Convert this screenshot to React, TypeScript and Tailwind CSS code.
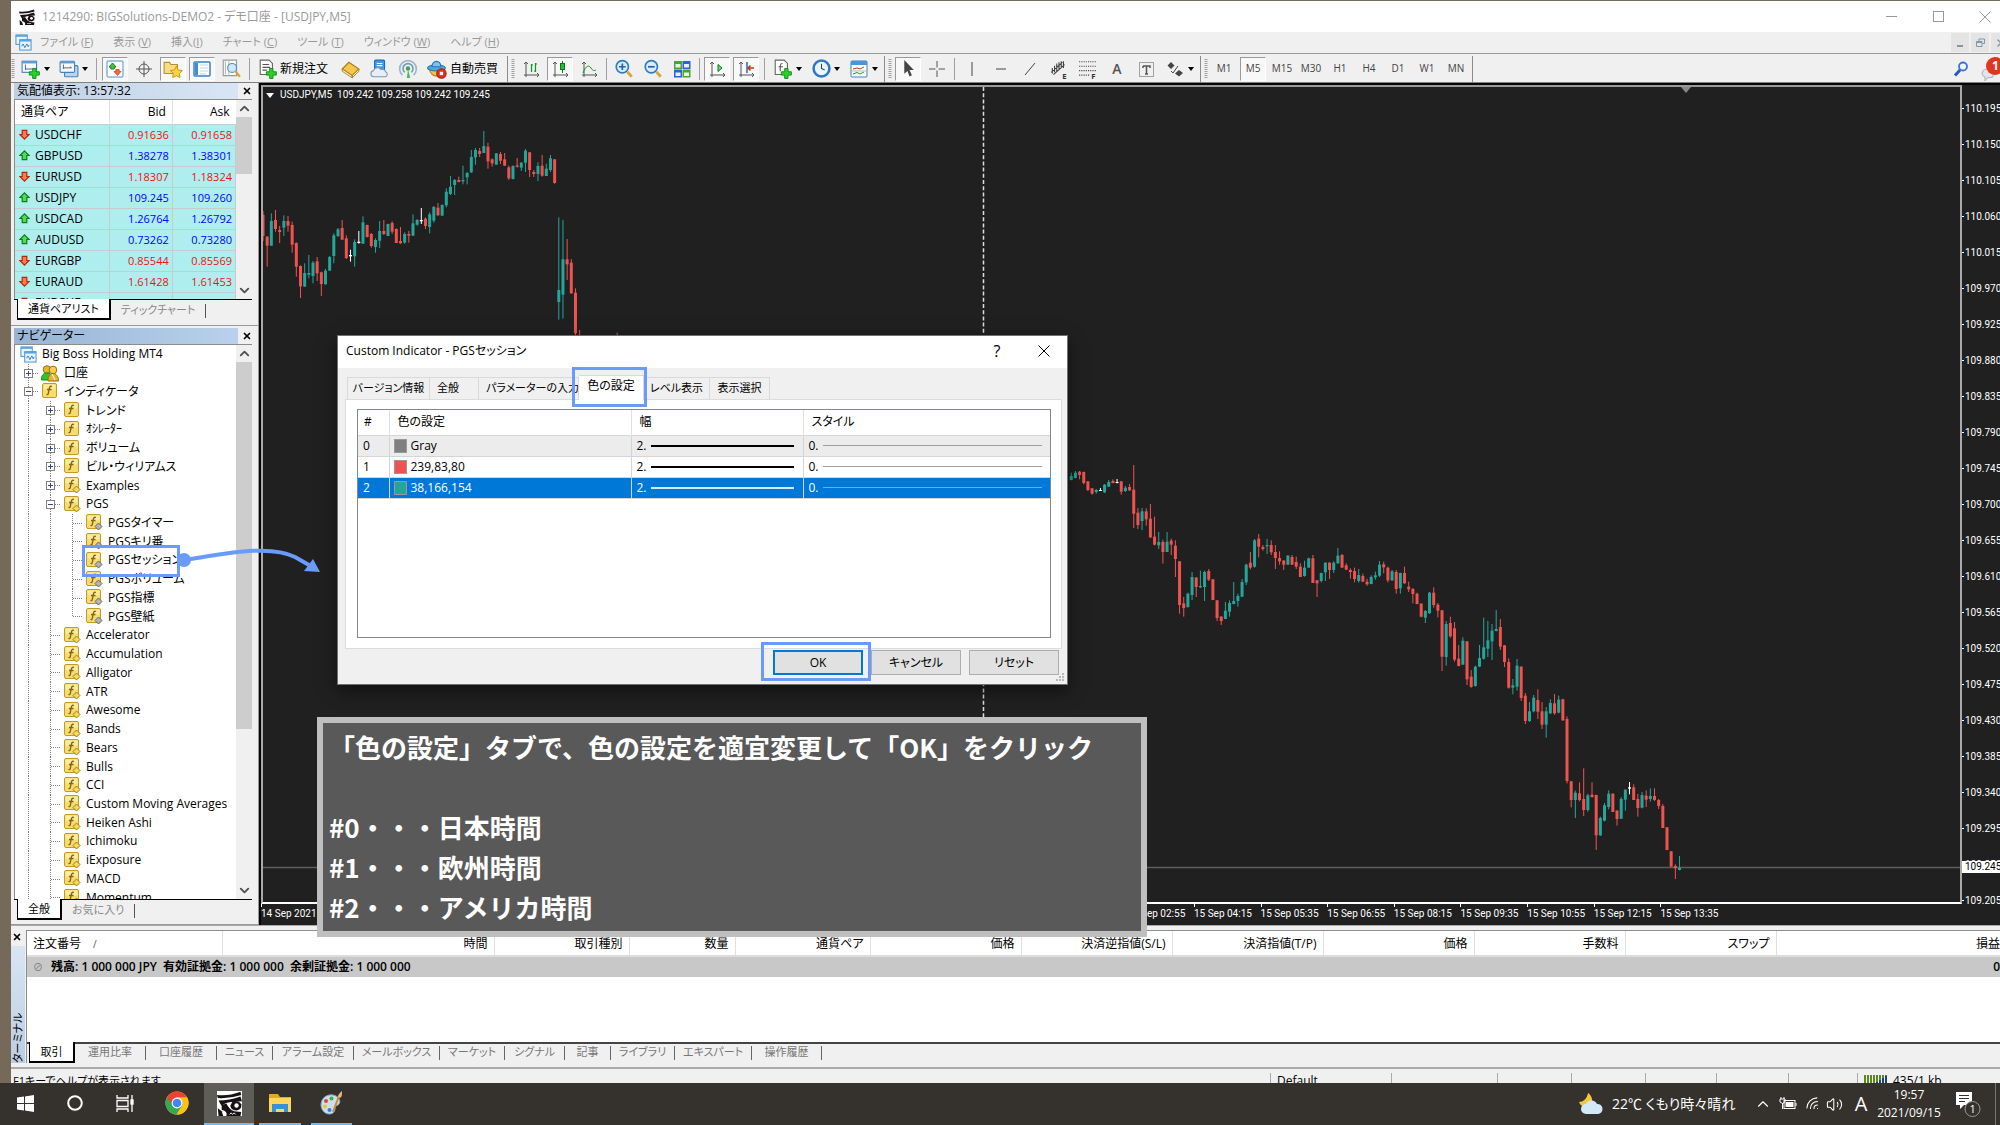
import { ReactNode } from 'react'
import clsx from 'clsx'
import { Wifi, Volume2, ChevronUp, ChevronDown, X } from 'lucide-react'

const UP = '#26a69a'
const DOWN = '#ef5350'

/* ---------- icons ---------- */

function Svg({ size = 18, children }: { size?: number; children: ReactNode }) {
  return (
    <svg width={size} height={size} viewBox="0 0 18 18" fill="none" className="shrink-0">
      {children}
    </svg>
  )
}

function LogoIcon({ size = 16, light = false }: { size?: number; light?: boolean }) {
  return (
    <svg width={size} height={size} viewBox="0 0 16 16" className="shrink-0">
      <rect width="16" height="16" fill={light ? '#fff' : 'none'} />
      <path d="M0 2.500Q7 3.500 15 0.500L15.500 2.500Q8 5 0.500 4.500Z" fill="#171114" />
      <path d="M1 6Q8 6 15 3.500L16 6.500L9 7Q5 7.500 3 9.500L2 8Z" fill="#171114" />
      <path d="M10 6.500Q14 6 15.500 8.500Q16 12 12.500 12.500Q9 12.500 8.500 9.500Z" fill="#171114" />
      <path d="M3 9L6 8Q8 12 11 13L15.500 13.500L15 16H6Q7 13 3 12Z" fill="#171114" />
      <circle cx="12.500" cy="9.300" r="1.400" fill="#fff" />
      <path d="M0.500 11L3 13L4 16H1Z" fill="#171114" />
      <path d="M8 15l1-1 1 1 1-1 1 1" stroke="#fff" strokeWidth="0.600" fill="none" />
    </svg>
  )
}

function WindowsIcon() {
  return (
    <Svg size={17}>
      <rect x="1" y="1" width="12" height="10" fill="#eaf4fd" stroke="#3f8fd2" />
      <rect x="1" y="1" width="12" height="2" fill="#5aa5e0" />
      <rect x="5" y="6" width="12" height="11" fill="#eaf4fd" stroke="#3f8fd2" />
      <rect x="5" y="6" width="12" height="2" fill="#5aa5e0" />
      <path d="M7 13l1.500-2.500 2 4 2-4 1.500 3 1-2" stroke="#2f7fc8" />
    </Svg>
  )
}

const plus = <path d="M10.500 8.500h3v3h3v3h-3v3h-3v-3h-3v-3h3z" fill="#2bd02b" stroke="#0c8a12" strokeWidth="0.8" />

const icons = {
  newChart: (
    <Svg size={20}>
      <rect x="1" y="2" width="13" height="10" fill="#f4fafe" stroke="#4482b5" />
      <path d="M1 3h13" stroke="#5d9bd0" strokeWidth="2" />
      <path d="M4 5v5M4 9h7" stroke="#557" strokeWidth="0.8" />
      {plus}
    </Svg>
  ),
  profiles: (
    <Svg size={20}>
      <rect x="5" y="6" width="12" height="10" rx="1" fill="#b9d6ee" stroke="#4482b5" />
      <rect x="1" y="2" width="13" height="10" rx="1" fill="#f4fafe" stroke="#4482b5" />
      <path d="M1 3h13" stroke="#5d9bd0" strokeWidth="2" />
      <path d="M4 5v4M4 8h7M10 7l1.500 1" stroke="#557" strokeWidth="0.8" />
    </Svg>
  ),
  marketWatch: (
    <Svg>
      <rect x="1" y="1" width="16" height="16" rx="1" fill="#fff" stroke="#4a90c8" />
      <path d="M6.500 3l3.500 4H8.200v2H4.800V7H3z" fill="#ff6a3a" stroke="#a82b0c" strokeWidth="0.6" />
      <path d="M11.500 15.500l3.500-4h-1.800v-2H9.800v2H8z" fill="#ff6a3a" stroke="#a82b0c" strokeWidth="0.6" />
      <path d="M6.500 3l3.500 4H8.200v2H4.800V7H3z" fill="#2fc93f" stroke="#0b7a15" strokeWidth="0.6" />
    </Svg>
  ),
  target: (
    <Svg>
      <circle cx="9" cy="9" r="5" stroke="#555" />
      <path d="M9 1v16M1 9h16" stroke="#555" />
    </Svg>
  ),
  navigator: (
    <Svg size={20}>
      <path d="M1 3h5l1 2h6v8H1z" fill="#f7dc84" stroke="#b9902a" />
      <path d="M12 6.500l1.700 3.400 3.700.5-2.700 2.600.6 3.700-3.300-1.700-3.300 1.700.6-3.700L6.600 10.400l3.700-.5z" fill="#ffd63a" stroke="#c48a0c" strokeWidth="0.8" />
    </Svg>
  ),
  terminal: (
    <Svg>
      <rect x="1" y="2" width="16" height="14" rx="1" fill="#fff" stroke="#3a7fc0" strokeWidth="1.500" />
      <rect x="2" y="3" width="3" height="12" fill="#3f8fd8" />
      <path d="M7 5h8M7 8h8M7 11h8M7 14h6" stroke="#9cc1e4" strokeWidth="0.7" />
    </Svg>
  ),
  tester: (
    <Svg size={20}>
      <path d="M2 1h12v14H2z" fill="#fbfbfb" stroke="#999" />
      <path d="M4 2v12M7 2v12" stroke="#bbb" />
      <circle cx="10" cy="8" r="4" fill="#cfe7f8" stroke="#4c90c6" />
      <path d="M13 11l4 5" stroke="#d9a433" strokeWidth="2" />
    </Svg>
  ),
  newOrder: (
    <Svg size={20}>
      <path d="M2 1h8l3 3v10H2z" fill="#fff" stroke="#666" />
      <path d="M4 5h6M4 7.500h7M4 10h4" stroke="#555" />
      {plus}
    </Svg>
  ),
  book: (
    <Svg size={20}>
      <path d="M2 9l6-6 9 6-6 6z" fill="#f4c64a" stroke="#a8791a" />
      <path d="M2 9v2l9 6v-2zM11 15v2l6-6V9z" fill="#fff3cf" stroke="#a8791a" strokeWidth="0.8" />
    </Svg>
  ),
  vps: (
    <Svg size={20}>
      <rect x="5" y="1" width="9" height="9" rx="1" fill="#3d9be8" stroke="#1b6cb8" />
      <path d="M7 4h5M7 6h5" stroke="#fff" />
      <path d="M4 16a2.800 2.800 0 0 1 0-5.500 4 4 0 0 1 7-1 3 3 0 0 1 4 2 2.500 2.500 0 0 1 0 4.500z" fill="#e8eef6" stroke="#8097b5" />
    </Svg>
  ),
  signal: (
    <Svg size={20}>
      <path d="M4 14.500a7.500 7.500 0 1 1 10 0" stroke="#9fb6cc" strokeWidth="1.500" />
      <path d="M6 12a4.500 4.500 0 1 1 6 0" stroke="#6f9fb0" strokeWidth="1.500" />
      <circle cx="9" cy="8.500" r="2" fill="#3aa655" />
      <path d="M9 9l2 8H8z" fill="#49b862" />
    </Svg>
  ),
  autoTrade: (
    <Svg size={20}>
      <path d="M2 9c2 8 12 9 14 0z" fill="#f5c542" stroke="#b98a1a" />
      <ellipse cx="8.500" cy="8" rx="8" ry="2.800" fill="#52a8e0" stroke="#2476b0" />
      <path d="M4.500 7c0-6.500 8-6.500 8 0z" fill="#7cc3ee" stroke="#2476b0" />
      <circle cx="13" cy="13" r="4.200" fill="#e03020" stroke="#a81a10" />
      <rect x="11.500" y="11.500" width="3" height="3" fill="#fff" />
    </Svg>
  ),
  bars: (
    <Svg>
      <path d="M4 2v15M2 15h15M2 4l2-2 2 2M15 13l2 2-2 2" stroke="#555" />
      <path d="M9.500 4v8M11 5H9.500M13.500 3v9M12 11h1.500M13.500 4H15" stroke="#0b9a1b" strokeWidth="1.200" />
    </Svg>
  ),
  candles: (
    <Svg>
      <path d="M4 2v15M2 15h15M2 4l2-2 2 2M15 13l2 2-2 2" stroke="#555" />
      <path d="M11.500 1v12" stroke="#0b7a15" />
      <rect x="9.500" y="3.500" width="4" height="6" fill="#22c03a" stroke="#0b7a15" />
    </Svg>
  ),
  line: (
    <Svg>
      <path d="M4 2v15M2 15h15M2 4l2-2 2 2M15 13l2 2-2 2" stroke="#555" />
      <path d="M3 13c3-8 6-8 8-5s3 3 5 2" stroke="#0b9a1b" />
    </Svg>
  ),
  zoomIn: (
    <Svg size={20}>
      <circle cx="7.500" cy="7" r="5.500" fill="#d8ecfb" stroke="#2b7cc4" strokeWidth="1.500" />
      <path d="M4.500 7h6M7.500 4v6" stroke="#1f64a8" strokeWidth="1.500" />
      <path d="M12 11.500l4 4.500" stroke="#dba63a" strokeWidth="2.500" />
    </Svg>
  ),
  zoomOut: (
    <Svg size={20}>
      <circle cx="7.500" cy="7" r="5.500" fill="#d8ecfb" stroke="#2b7cc4" strokeWidth="1.500" />
      <path d="M4.500 7h6" stroke="#1f64a8" strokeWidth="1.500" />
      <path d="M12 11.500l4 4.500" stroke="#dba63a" strokeWidth="2.500" />
    </Svg>
  ),
  tile: (
    <Svg>
      <rect x="1" y="1" width="8" height="8" fill="#4ca52a" />
      <rect x="9.500" y="1" width="8" height="8" fill="#2d63d6" />
      <rect x="1" y="9.500" width="8" height="8" fill="#2d63d6" />
      <rect x="9.500" y="9.500" width="8" height="8" fill="#4ca52a" />
      <path d="M2.500 4h5v3.500h-5zM11 4h5v3.500h-5zM2.500 12.500h5V16h-5zM11 12.500h5V16h-5z" fill="#e4f2ff" />
    </Svg>
  ),
  autoScroll: (
    <Svg>
      <path d="M4 2v15M2 15h15M2 4l2-2 2 2M15 13l2 2-2 2" stroke="#555" />
      <path d="M10 4.500l4 3.500-4 3.500z" fill="#5fe070" stroke="#0b7a15" />
    </Svg>
  ),
  chartShift: (
    <Svg>
      <path d="M4 2v15M2 15h15M2 4l2-2 2 2M15 13l2 2-2 2" stroke="#555" />
      <path d="M10 2v11" stroke="#2766b8" strokeWidth="1.500" />
      <path d="M11 8h6M13.500 5.500L11 8l2.500 2.500" stroke="#c43a12" strokeWidth="1.500" />
    </Svg>
  ),
  indicators: (
    <Svg size={20}>
      <path d="M2 1h8l3 3v10H2z" fill="#fff" stroke="#666" />
      <path d="M8.500 4c-2 0-2 1-2 3v4M5 7h4" stroke="#555" />
      {plus}
    </Svg>
  ),
  clock: (
    <Svg size={19}>
      <circle cx="9" cy="9" r="7.500" fill="#eaf5fd" stroke="#2c78c8" strokeWidth="2.400" />
      <path d="M9 4.500V9l3 1.500" stroke="#345" />
    </Svg>
  ),
  templates: (
    <Svg>
      <rect x="1" y="1" width="16" height="16" rx="1" fill="#fff" stroke="#3f82c0" />
      <rect x="1" y="1" width="16" height="4" fill="#4a94d8" />
      <path d="M3 9l4-1 3 1 4-2" stroke="#c0391b" />
      <path d="M3 14l4-1.500 3 1.500 4-2" stroke="#1d9a34" />
      <path d="M1 11h16" stroke="#9ab" strokeWidth="0.8" />
    </Svg>
  ),
  cursor: (
    <Svg size={19}>
      <path d="M5 1v13l3-2.700 2 5.200 2.200-1-2.200-5h4z" fill="#444" />
    </Svg>
  ),
  cross: (
    <Svg>
      <path d="M9 1v6.500M9 10.500V17M1 9h6.500M10.500 9H17" stroke="#555" />
    </Svg>
  ),
  vline: <Svg><path d="M9 2v14" stroke="#444" /></Svg>,
  hline: <Svg><path d="M4 9h10" stroke="#444" /></Svg>,
  tline: <Svg><path d="M4 15L14 3" stroke="#444" /></Svg>,
  channel: (
    <Svg size={20}>
      <path d="M2 12L12 3M4 14L14 5M3 8v5M5 6v6M7 4v7M9 3v6M11 2v6M13 2v6" stroke="#444" />
      <text x="12" y="18" fontSize="7" fontWeight="700" fill="#333">E</text>
    </Svg>
  ),
  fibo: (
    <Svg size={20}>
      <path d="M1 2.500h15M1 6.500h15M1 10.500h15M1 14.500h9" stroke="#444" strokeDasharray="1 1" />
      <text x="12" y="18" fontSize="7" fontWeight="700" fill="#333">F</text>
    </Svg>
  ),
  textA: <span className="text-sm font-semibold text-[#555]">A</span>,
  label: (
    <Svg>
      <rect x="2.500" y="2.500" width="14" height="14" stroke="#555" strokeDasharray="1 1" />
      <path d="M6 6h7v2M9.500 6v8M8 14h3M6 6v2" stroke="#555" strokeWidth="1.500" />
    </Svg>
  ),
  arrows: (
    <Svg>
      <path d="M5 2l3.500 3.500L5 9 1.500 5.500zM13 10l4 3-4 3.500-4-3z" fill="#444" />
      <path d="M5 11l2 2 5-7" stroke="#444" />
    </Svg>
  ),
}

function FolderGlyph({ mark }: { mark?: 'gold' | 'gray' }) {
  return (
    <svg width="17" height="17" viewBox="0 0 17 17" className="shrink-0">
      <rect x="0.500" y="0.500" width="14" height="14" rx="1.500" fill="#f6dc70" stroke="#c79a1d" />
      <rect x="1.500" y="1.500" width="12" height="5" fill="#fbeaa0" />
      <path d="M10 3.500c-2-.8-2.500.5-2.800 2.500L6.400 10c-.3 1.500-1 1.800-2 1.500M5 6.500h4.500" stroke="#86640e" strokeWidth="1.300" fill="none" />
      {mark && (
        <path
          d="M12.500 9l3.500 3.500-3.500 3.500L9 12.500z"
          fill={mark === 'gold' ? '#f7d95a' : '#b5b5b5'}
          stroke={mark === 'gold' ? '#a57b12' : '#666'}
        />
      )}
    </svg>
  )
}

function AccountsIcon() {
  return (
    <svg width="18" height="17" viewBox="0 0 18 17" className="shrink-0">
      <circle cx="6" cy="4.500" r="3.800" fill="#e8b62a" stroke="#97700f" />
      <path d="M0.500 15c0-5 2-7 5.500-7s5 2 5 7z" fill="#2fc234" stroke="#158a1c" />
      <circle cx="12" cy="5" r="3.800" fill="#f5cf52" stroke="#97700f" />
      <path d="M7 16c0-5 2-7.500 5-7.500s5.500 2.500 5.500 7.500z" fill="#e8b62a" stroke="#97700f" />
      <path d="M11 9l3 6" stroke="#fff" />
    </svg>
  )
}

function PriceArrow({ up }: { up: boolean }) {
  return (
    <svg width="11" height="11" viewBox="0 0 12 12" className="shrink-0">
      {up ? (
        <path d="M6 1l5 5H8.500v4.500h-5V6H1z" fill="#4fdc53" stroke="#0d7d1a" strokeWidth="1.300" />
      ) : (
        <path d="M6 11l5-5H8.500V1.500h-5V6H1z" fill="#ff7a45" stroke="#b0290e" strokeWidth="1.300" />
      )}
    </svg>
  )
}

/* ---------- title, menu, toolbar ---------- */

function TitleBar() {
  return (
    <header className="flex h-[31px] shrink-0 items-center bg-white pl-2 text-xs text-[#999]">
      <LogoIcon />
      <h1 className="ml-[7px] flex-1">1214290: BIGSolutions-DEMO2 - デモ口座 - [USDJPY,M5]</h1>
      <button aria-label="最小化" className="flex w-[47px] justify-center">
        <svg width="11" height="11"><path d="M0 5.500h11" stroke="#999" /></svg>
      </button>
      <button aria-label="最大化" className="flex w-[47px] justify-center">
        <svg width="11" height="11"><rect x="0.500" y="0.500" width="10" height="10" fill="none" stroke="#999" /></svg>
      </button>
      <button aria-label="閉じる" className="flex w-[38px] justify-center pl-2">
        <svg width="12" height="12"><path d="M0.500 0.500l11 11M11.500 0.500l-11 11" stroke="#999" /></svg>
      </button>
    </header>
  )
}

const menus = [
  ['ファイル (', 'F'],
  ['表示 (', 'V'],
  ['挿入(', 'I'],
  ['チャート (', 'C'],
  ['ツール (', 'T'],
  ['ウィンドウ (', 'W'],
  ['ヘルプ (', 'H'],
]

function MenuBar() {
  return (
    <nav className="flex h-[21px] shrink-0 items-center pl-1 text-[11px] text-[#999]">
      <WindowsIcon />
      <div className="ml-2 flex flex-1 gap-5">
        {menus.map(([label, key]) => (
          <button key={key}>
            {label}
            <u>{key}</u>)
          </button>
        ))}
      </div>
      <div className="flex h-[19px] gap-0.5 text-[#8296a8]">
        <button aria-label="最小化" className="flex w-[18px] items-end justify-center bg-[#e4e4e4] pb-[5px]">
          <svg width="6" height="2"><rect width="6" height="2" fill="#8296a8" /></svg>
        </button>
        <button aria-label="元に戻す" className="flex w-[18px] items-center justify-center bg-[#e4e4e4]">
          <svg width="9" height="9" fill="none" stroke="#8296a8"><path d="M3 3V1h5.500v4.500h-2M0.500 3.500h5.500v5h-5.500zM1 4.500h5" /></svg>
        </button>
        <button aria-label="閉じる" className="flex w-[9px] items-center overflow-hidden bg-[#e4e4e4] pl-1">
          <X size={12} strokeWidth={3} className="shrink-0" />
        </button>
      </div>
    </nav>
  )
}

function Tool({ name, pressed }: { name: keyof typeof icons; pressed?: boolean }) {
  return (
    <button
      aria-label={name}
      className={clsx(
        'flex h-6 w-[26px] shrink-0 items-center justify-center',
        pressed && 'border border-t-[#9a9a9a] border-r-white border-b-white border-l-[#9a9a9a] bg-[#f8f8f8]'
      )}
    >
      {icons[name]}
    </button>
  )
}

function DropTool({ name }: { name: keyof typeof icons }) {
  return (
    <button aria-label={name} className="flex h-6 w-[35px] shrink-0 items-center">
      <span className="flex w-[26px] justify-center">{icons[name]}</span>
      <svg width="6" height="4"><path d="M0 0h6L3 4z" fill="#000" /></svg>
    </button>
  )
}

function Grip() {
  return (
    <svg width="4" height="20" className="shrink-0">
      <path d="M2 0v20" stroke="#a0a0a0" strokeWidth="3" strokeDasharray="1 1" />
    </svg>
  )
}

const Sep = ({ wide }: { wide?: boolean }) => (
  <div className={clsx('flex shrink-0 justify-center', wide ? 'w-[5px]' : 'w-[3px]')}>
    <div className="h-[22px] w-px bg-[#a0a0a0]" />
  </div>
)

const Boundary = () => <div className="h-[26px] w-px shrink-0 bg-[#8c8c8c]" />

const periods = ['M1', 'M5', 'M15', 'M30', 'H1', 'H4', 'D1', 'W1', 'MN']

function Toolbar() {
  return (
    <div className="flex h-[30px] shrink-0 items-center gap-[3px] border-t border-b border-t-[#999] border-b-[#808080] pt-px">
      <Grip />
      <DropTool name="newChart" />
      <DropTool name="profiles" />
      <Sep wide />
      <Tool name="marketWatch" pressed />
      <Tool name="target" />
      <Tool name="navigator" pressed />
      <Tool name="terminal" pressed />
      <Tool name="tester" />
      <Sep wide />
      <button className="flex w-[79px] shrink-0 items-center text-xs">
        <span className="flex w-[25px] shrink-0 justify-center">{icons.newOrder}</span>
        新規注文
      </button>
      <Tool name="book" />
      <Tool name="vps" />
      <Tool name="signal" />
      <button className="flex w-[80px] shrink-0 items-center text-xs">
        <span className="flex w-[26px] shrink-0 justify-center">{icons.autoTrade}</span>
        自動売買
      </button>
      <Boundary />
      <Grip />
      <Tool name="bars" />
      <Tool name="candles" pressed />
      <Tool name="line" />
      <Sep />
      <Tool name="zoomIn" />
      <Tool name="zoomOut" />
      <Tool name="tile" />
      <Sep />
      <Tool name="autoScroll" pressed />
      <Tool name="chartShift" pressed />
      <Sep wide />
      <DropTool name="indicators" />
      <DropTool name="clock" />
      <DropTool name="templates" />
      <Boundary />
      <Grip />
      <Tool name="cursor" pressed />
      <Tool name="cross" />
      <Sep />
      <Tool name="vline" />
      <Tool name="hline" />
      <Tool name="tline" />
      <Tool name="channel" />
      <Tool name="fibo" />
      <Tool name="textA" />
      <Tool name="label" />
      <DropTool name="arrows" />
      <Boundary />
      <Grip />
      {periods.map((p) => (
        <button
          key={p}
          className={clsx(
            'h-6 w-[26px] shrink-0 text-center text-[10px] text-[#444]',
            p === 'M5' && 'border border-t-[#9a9a9a] border-r-white border-b-white border-l-[#9a9a9a] bg-[#f8f8f8]'
          )}
        >
          {p}
        </button>
      ))}
      <Boundary />
      <div className="flex-1" />
      <button aria-label="検索" className="mr-2">
        <svg width="16" height="16" viewBox="0 0 16 16" fill="none">
          <circle cx="10" cy="5.500" r="4" fill="#eef5ff" stroke="#3a70dc" strokeWidth="1.800" />
          <path d="M7 9l-5 5.500" stroke="#2457c8" strokeWidth="3" />
        </svg>
      </button>
      <button aria-label="通知" className="flex w-5 overflow-hidden">
        <svg width="26" height="26" viewBox="0 0 26 26" className="shrink-0">
          <path d="M2 17a6 5 0 0 1 11-2v6l-6 1-2 3v-4q-3-1-3-4z" fill="#e4e4ec" stroke="#b0b0bc" />
          <circle cx="15" cy="10" r="9" fill="#e0351f" />
          <text x="12" y="14" fontSize="12" fontWeight="700" fill="#fff">1</text>
        </svg>
      </button>
    </div>
  )
}

/* ---------- side panels ---------- */

const quotes = [
  { symbol: 'USDCHF', bid: '0.91636', ask: '0.91658', up: false },
  { symbol: 'GBPUSD', bid: '1.38278', ask: '1.38301', up: true },
  { symbol: 'EURUSD', bid: '1.18307', ask: '1.18324', up: false },
  { symbol: 'USDJPY', bid: '109.245', ask: '109.260', up: true },
  { symbol: 'USDCAD', bid: '1.26764', ask: '1.26792', up: true },
  { symbol: 'AUDUSD', bid: '0.73262', ask: '0.73280', up: true },
  { symbol: 'EURGBP', bid: '0.85544', ask: '0.85569', up: false },
  { symbol: 'EURAUD', bid: '1.61428', ask: '1.61453', up: false },
  { symbol: 'EURCHF', bid: '1.08411', ask: '1.08441', up: false },
]

function PanelTitle({ title, active }: { title: string; active?: boolean }) {
  return (
    <div className="flex h-4 shrink-0 items-center text-xs leading-4">
      <h2
        className={clsx(
          'h-4 flex-1 overflow-hidden bg-linear-to-r pl-[3px] whitespace-nowrap',
          active ? 'from-[#98b4d4] to-[#b9d1ec]' : 'from-[#bfcfe2] to-[#d8e6f4]'
        )}
      >
        {title}
      </h2>
      <button aria-label="閉じる" className="flex w-[18px] justify-center">
        <X size={10} strokeWidth={4} />
      </button>
    </div>
  )
}

function ScrollBar({ thumb }: { thumb: string }) {
  return (
    <div className="flex w-4 shrink-0 flex-col items-center bg-[#f0f0f0]">
      <ChevronUp size={15} strokeWidth={3} className="my-px shrink-0 text-[#505050]" />
      <div className={clsx('w-full bg-[#cdcdcd]', thumb)} />
      <div className="flex-1" />
      <ChevronDown size={15} strokeWidth={3} className="my-px shrink-0 text-[#505050]" />
    </div>
  )
}

function PanelTabs({ active, other }: { active: string; other: string }) {
  return (
    <div className="mr-1 flex h-[21px] shrink-0 border-t border-black pl-[3px] text-[11px]">
      <button className="-mt-px h-[21px] border-r-2 border-b-2 border-l border-black bg-white px-2.5 leading-4">{active}</button>
      <button className="px-2.5 leading-4 text-[#888]">{other}</button>
      <div className="mt-1 h-[14px] w-px bg-[#555]" />
    </div>
  )
}

function MarketWatch() {
  return (
    <section className="flex h-[243px] shrink-0 flex-col border-b border-[#999] pr-0.5 pl-[3px]">
      <PanelTitle title="気配値表示: 13:57:32" />
      <div className="mr-1 flex h-[200px] overflow-hidden border-t border-l border-[#8c8c8c]">
        <div className="flex-1 overflow-hidden bg-white">
          <table className="w-full table-fixed text-xs">
            <thead>
              <tr className="h-6">
                <th className="w-[94px] border-r border-[#e0e0e0] pl-1.5 text-left font-normal">通貨ペア</th>
                <th className="border-r border-[#e0e0e0] pr-1.5 text-right font-normal">Bid</th>
                <th className="pr-1.5 text-right font-normal">Ask</th>
              </tr>
            </thead>
            <tbody>
              {quotes.map((q) => (
                <tr key={q.symbol} className="h-[21px] border-t border-[#c4cccc] bg-[#afeeee]">
                  <td className="border-r border-[#c4cccc] pl-1 leading-4">
                    <div className="flex items-center gap-[5px]">
                      <PriceArrow up={q.up} />
                      {q.symbol}
                    </div>
                  </td>
                  {[q.bid, q.ask].map((v, i) => (
                    <td
                      key={i}
                      className={clsx(
                        'border-r border-[#c4cccc] pr-[3px] text-right text-[11px] leading-4',
                        q.up ? 'text-[#0000ff]' : 'text-[#f01010]'
                      )}
                    >
                      {v}
                    </td>
                  ))}
                </tr>
              ))}
            </tbody>
          </table>
        </div>
        <ScrollBar thumb="h-[57px]" />
      </div>
      <PanelTabs active="通貨ペアリスト" other="ティックチャート" />
    </section>
  )
}

type Node = { label: string; level: number; box?: '+' | '-'; icon?: 'root' | 'accounts' | 'gold' | 'gray'; last?: boolean }

const tree: Node[] = [
  { label: 'Big Boss Holding MT4', level: 0, icon: 'root' },
  { label: '口座', level: 1, box: '+', icon: 'accounts' },
  { label: 'インディケータ', level: 1, box: '-' },
  { label: 'トレンド', level: 2, box: '+' },
  { label: 'ｵｼﾚｰﾀｰ', level: 2, box: '+' },
  { label: 'ボリューム', level: 2, box: '+' },
  { label: 'ビル・ウィリアムス', level: 2, box: '+' },
  { label: 'Examples', level: 2, box: '+', icon: 'gold' },
  { label: 'PGS', level: 2, box: '-', icon: 'gold' },
  { label: 'PGSタイマー', level: 3, icon: 'gray' },
  { label: 'PGSキリ番', level: 3, icon: 'gray' },
  { label: 'PGSセッション', level: 3, icon: 'gray' },
  { label: 'PGSボリューム', level: 3, icon: 'gray' },
  { label: 'PGS指標', level: 3, icon: 'gray' },
  { label: 'PGS壁紙', level: 3, icon: 'gray', last: true },
  ...[
    'Accelerator', 'Accumulation', 'Alligator', 'ATR', 'Awesome', 'Bands', 'Bears', 'Bulls', 'CCI',
    'Custom Moving Averages', 'Heiken Ashi', 'Ichimoku', 'iExposure', 'MACD', 'Momentum',
  ].map((label): Node => ({ label, level: 2, icon: 'gold' })),
]

function TreeRow({ node }: { node: Node }) {
  return (
    <li className="flex min-h-0 flex-1 items-center whitespace-nowrap">
      {Array.from({ length: node.level }).map((_, i) => {
        const own = i === node.level - 1
        return (
          <svg key={i} className="h-full w-[22px] shrink-0" stroke="#808080">
            <path d={own && node.last ? 'M11.500 0v10' : 'M11.500 0v20'} strokeDasharray="1 1" />
            {own && <path d="M12 9.500h10" strokeDasharray="1 1" />}
            {own && node.box && (
              <>
                <rect x="7.500" y="5.500" width="8" height="8" fill="#fff" />
                <path d={node.box === '+' ? 'M9 9.500h5M11.500 7v5' : 'M9 9.500h5'} stroke="#2a4a9a" />
              </>
            )}
          </svg>
        )
      })}
      <span className="mr-[5px] ml-0.5 flex w-[18px] justify-center">
        {node.icon === 'root' ? (
          <WindowsIcon />
        ) : node.icon === 'accounts' ? (
          <AccountsIcon />
        ) : (
          <FolderGlyph mark={node.icon} />
        )}
      </span>
      {node.label}
    </li>
  )
}

function Navigator() {
  return (
    <section className="flex min-h-0 flex-1 flex-col border-b border-[#999] pt-0.5 pr-0.5 pb-1 pl-[3px]">
      <PanelTitle title="ナビゲーター" active />
      <div className="mr-1 flex min-h-0 flex-1 border-t border-l border-[#8c8c8c] bg-white">
        <div className="min-w-0 flex-1 overflow-hidden">
          <ul className="flex h-[562px] flex-col pl-0.5 text-xs">
            {tree.map((n) => (
              <TreeRow key={n.label} node={n} />
            ))}
          </ul>
        </div>
        <ScrollBar thumb="h-[367px]" />
      </div>
      <PanelTabs active="全般" other="お気に入り" />
    </section>
  )
}

/* ---------- chart ---------- */

// high, body top, body bottom, low (in thirds of a pixel), direction
const segments = [
  {
    start: 0,
    base: -7,
    data: `393 404 468 483 d|468 470 497 560 d|400 423 497 497 u|390 420 447 455 d|438 450 456 489 d|406 423 443 468 u|408 423 437 455 d|425 435 494 518 d|487 489 560 590 d|556 558 619 654 d|550 579 620 620 u|525 579 584 595 u|543 548 588 610 u|531 544 580 603 d|575 577 612 648 d|567 572 613 613 u|528 531 572 572 u|460 466 528 550 u|444 448 468 471 u|420 444 479 479 d|466 475 534 537 d|509 525 529 545 w|478 486 529 560 u|453 485 489 491 w|409 427 491 491 u|434 435 471 472 d|459 462 498 503 d|475 480 501 518 u|423 453 482 504 u|420 453 462 465 d|431 432 468 468 u|424 429 455 462 d|445 447 489 489 d|441 483 490 491 d|457 462 488 491 u|453 462 467 488 d|403 430 467 468 u|417 420 434 437 u|384 420 424 432 w|412 416 438 447 d|397 403 441 460 u|378 381 422 428 u|369 383 406 407 d|373 375 407 407 u|325 335 376 382 u|288 320 342 345 u|297 300 315 345 u|290 300 306 307 d|257 300 304 313 u|276 279 292 313 u|210 231 277 279 u|204 210 232 254 u|204 213 222 231 d|153 198 219 219 u|188 200 244 266 d|235 238 250 260 d|219 220 254 254 u|216 222 242 252 d|219 238 257 258 d|257 262 295 300 d|256 258 297 298 u|234 256 260 263 d|246 248 263 273 u|207 212 248 276 u|216 217 270 291 d|270 276 282 291 d|247 258 282 303 u|225 257 287 290 d|251 266 288 288 u|225 235 270 276 u|237 238 309 311 d|412 630 666 719 u|420 538 644 716 u|477 538 553 600 d|537 548 640 641 d|625 638 760 766 d|750 766 775 780 d`,
  },
  { start: 85, base: -7, data: '758 768 775 780 d' },
  {
    start: 194,
    base: 333,
    data: `158 168 180 181 u|153 158 174 175 u|153 155 165 178 d|155 156 189 193 d|183 184 210 213 d|204 205 221 224 d|207 210 216 221 u|204 210 213 213 w|192 194 217 219 u|180 186 200 201 u|178 183 189 190 d|177 186 189 190 w|183 184 215 224 d|198 203 213 216 u|192 201 211 213 d|135 209 281 324 d|264 278 315 327 d|264 274 303 330 u|265 274 298 317 d|252 296 352 354 d|290 350 374 376 d|336 366 376 387 u|359 366 396 431 d|336 365 396 396 u|356 362 374 405 d|361 377 417 471 d|423 424 555 581 d|531 550 564 590 d|518 521 561 563 u|456 471 525 540 u|471 473 501 531 d|452 498 502 504 u|452 456 501 543 u|447 453 479 483 d|477 478 540 540 d|540 541 594 603 d|588 590 603 615 d|546 572 597 597 u|541 549 575 590 u|486 543 552 553 u|521 528 543 560 u|477 486 530 531 u|431 434 487 495 u|396 428 443 448 d|357 361 440 443 u|342 356 380 412 d|375 381 387 392 d|357 375 379 402 u|361 375 397 405 d|375 396 414 447 d|394 414 424 434 d|420 422 434 450 d|405 407 434 435 u|405 411 434 435 d|410 426 440 447 d|430 440 471 471 d|422 443 468 470 u|413 415 443 443 u|405 415 489 489 d|480 481 490 531 d|458 459 483 487 u|427 428 457 483 u|427 428 450 477 d|424 428 450 459 u|384 407 430 431 u|402 405 443 443 d|430 436 449 450 d|445 450 456 476 d|443 453 477 487 d|447 465 483 488 u|461 468 485 486 d|476 485 493 497 d|466 471 492 493 u|455 466 472 479 u|423 434 467 471 u|425 433 442 460 d|440 443 481 487 d|450 454 481 483 u|450 456 507 521 d|458 459 505 521 u|440 459 490 491 d|485 500 508 516 d|504 507 522 550 d|518 521 552 553 d|550 551 590 592 d|570 573 593 609 u|516 518 580 581 u|502 518 555 563 d|549 554 572 592 d|570 571 710 753 d|603 612 711 737 u|590 609 649 653 d|606 625 719 725 d|675 716 738 739 d|652 662 734 735 u|663 664 778 795 d|750 770 801 803 d|737 740 798 800 u|675 714 740 741 u|593 682 716 719 u|603 661 686 711 u|612 632 664 720 u|570 627 633 634 u|597 621 680 690 d|675 676 726 741 d|715 726 803 806 d|777 796 803 823 u|717 737 800 812 u|739 740 834 843 d|819 827 903 912 d|846 874 903 906 u|825 833 874 877 u|808 840 875 897 d|846 874 914 927 d|861 874 914 953 u|838 849 880 882 u|822 850 880 884 d|827 839 878 880 u|836 838 901 903 d|889 897 1083 1090 d|1083 1084 1140 1162 d|1112 1118 1140 1194 u|1087 1120 1140 1144 d|1045 1137 1170 1188 d|1121 1126 1170 1175 u|1087 1124 1131 1133 d|1124 1125 1246 1290 d|1190 1194 1246 1248 u|1149 1156 1202 1204 u|1111 1121 1161 1168 u|1120 1121 1176 1176 d|1170 1172 1197 1217 d|1131 1137 1196 1197 u|1108 1109 1139 1172 u|1086 1102 1106 1123 w|1093 1102 1140 1140 d|1122 1137 1164 1190 d|1116 1125 1163 1165 u|1111 1127 1139 1161 d|1105 1128 1137 1145 u|1105 1128 1140 1143 d|1137 1140 1158 1167 d|1152 1158 1224 1224 d|1221 1222 1290 1290 d|1293 1294 1340 1340 d|1333 1338 1345 1377 d|1308 1343 1350 1351 u`,
  },
]

const candles = segments.flatMap(({ start, base, data }) =>
  data.split('|').map((row, i) => {
    const [h, t, b, l, dir] = row.split(' ')
    return {
      x: (start + i) * 4.1662,
      high: base + +h / 3,
      top: base + +t / 3,
      bottom: base + +b / 3,
      low: base + +l / 3,
      color: dir === 'u' ? UP : dir === 'd' ? DOWN : '#fff',
    }
  })
)

const prices = Array.from({ length: 23 }, (_, i) => (110.195 - i * 0.045).toFixed(3))
const times = ['02:55', '04:15', '05:35', '06:55', '08:15', '09:35', '10:55', '12:15', '13:35']

function Chart() {
  return (
    <main className="flex min-w-0 flex-1 flex-col overflow-hidden border-t-2 border-l-2 border-[#050505] bg-[#202020] text-[10px] text-white font-[Roboto,sans-serif]">
      <div className="flex min-h-0 flex-1">
        <div className="relative min-w-0 flex-1 overflow-hidden border-t-2 border-r-2 border-b-2 border-l-2 border-t-[#999] border-r-[#aaa] border-b-white border-l-[#aaa]">
          <svg className="h-full w-full">
            <path d="M720.500 0V820" stroke="#ddd" strokeWidth="1.500" strokeDasharray="4 2.200" />
            <path d="M0 780.500H1800" stroke="#5c5c5c" strokeWidth="1.500" />
            <path d="M1418 0h10l-5 6z" fill="#888" />
            {candles.map((c, i) => (
              <g key={i} fill={c.color}>
                <rect x={c.x - 0.5} y={c.high} width="1" height={c.low - c.high} />
                <rect x={c.x - 1.5} y={c.top} width="3" height={Math.max(c.bottom - c.top, 1)} />
              </g>
            ))}
          </svg>
          <div className="absolute top-0 left-[3px] flex items-center gap-1.5 leading-4">
            <svg width="8" height="5"><path d="M0 0h8L4 5z" fill="#fff" /></svg>
            <span className="whitespace-pre">USDJPY,M5  109.242 109.258 109.242 109.245</span>
          </div>
        </div>
        <div className="relative flex w-[38px] shrink-0 flex-col overflow-hidden pt-[5px]">
          {prices.map((p) => (
            <div key={p} className="flex h-9 shrink-0 items-center gap-px">
              <i className="h-px w-0.5 shrink-0 bg-white" />
              {p}
            </div>
          ))}
          <div className="absolute top-[776px] left-0 w-full bg-white pl-[3px] leading-3 text-black">109.245</div>
        </div>
      </div>
      <div className="flex h-[21px] w-[1466px] shrink-0 leading-[13px]">
        <div className="flex-1 whitespace-nowrap"><i className="block h-[3px] w-px bg-white" />14 Sep 2021</div>
        <div className="flex-12" />
        {times.map((t) => (
          <div key={t} className="flex-1 whitespace-nowrap">
            <i className="block h-[3px] w-px bg-white" />
            15 Sep {t}
          </div>
        ))}
      </div>
    </main>
  )
}

/* ---------- terminal ---------- */

const orderColumns = [
  ['注文番号', 'w-[195px]'],
  ['時間', 'w-[272px]'],
  ['取引種別', 'w-[135px]'],
  ['数量', 'w-[106px]'],
  ['通貨ペア', 'w-[135px]'],
  ['価格', 'w-[151px]'],
  ['決済逆指値(S/L)', 'w-[151px]'],
  ['決済指値(T/P)', 'w-[151px]'],
  ['価格', 'w-[151px]'],
  ['手数料', 'w-[151px]'],
  ['スワップ', 'w-[151px]'],
]

const terminalTabs = [
  ['運用比率', 'w-[71px]'],
  ['口座履歴', 'w-[71px]'],
  ['ニュース', 'w-[56px]'],
  ['アラーム設定', 'w-[81px]'],
  ['メールボックス', 'w-[86px]'],
  ['マーケット', 'w-[65px]'],
  ['シグナル', 'w-[60px]'],
  ['記事', 'w-[46px]'],
  ['ライブラリ', 'w-[64px]'],
  ['エキスパート', 'w-[77px]'],
  ['操作履歴', 'w-[70px]'],
]

function Terminal() {
  return (
    <section className="flex h-[144px] shrink-0 border-t border-b-2 border-[#aaa] pt-1 pb-1 text-xs">
      <div className="flex w-[15px] shrink-0 flex-col">
        <button aria-label="閉じる" className="flex h-4 items-start pt-0.5 pl-px">
          <X size={10} strokeWidth={4} />
        </button>
        <h2 className="w-[14px] flex-1 rotate-180 bg-linear-to-b from-[#bccde2] to-[#d8e6f4] text-[11px] leading-[14px] whitespace-nowrap [writing-mode:vertical-rl]">
          <span className="[text-orientation:sideways]">ターミナル</span>
        </h2>
      </div>
      <div className="flex min-w-0 flex-1 flex-col border-t border-l border-[#8c8c8c]">
        <div className="min-h-0 flex-1 overflow-hidden bg-white">
          <table className="w-full table-fixed">
            <thead>
              <tr className="h-[25px] border-b-2 border-[#dcdcdc]">
                {orderColumns.map(([label, width], i) => (
                  <th
                    key={i}
                    className={clsx(
                      'border-r border-[#e0e0e0] px-1.5 pt-0.5 font-normal whitespace-nowrap',
                      width,
                      i === 0 ? 'text-left' : 'text-right'
                    )}
                  >
                    {label}
                    {i === 0 && <span className="ml-3 text-[10px] text-[#555]">/</span>}
                  </th>
                ))}
                <th className="pt-0.5 text-right font-normal">損益</th>
              </tr>
            </thead>
            <tbody>
              <tr className="h-[21px] bg-[#c8c8c8] leading-4 font-semibold">
                <td colSpan={11} className="pl-1.5 whitespace-pre">
                  <span className="mr-2 text-[10px] font-normal text-[#777]">⊘</span>
                  残高: 1 000 000 JPY  有効証拠金: 1 000 000  余剰証拠金: 1 000 000
                </td>
                <td className="text-right">0</td>
              </tr>
            </tbody>
          </table>
        </div>
        <div className="flex h-[21px] shrink-0 border-t-2 border-[#444] text-[11px] text-[#777]">
          <button className="-mt-0.5 ml-0.5 h-[21px] w-[46px] border-r-2 border-b-2 border-l border-black bg-white leading-4 text-black">
            取引
          </button>
          {terminalTabs.map(([label, width]) => (
            <div key={label} className={clsx('flex items-start whitespace-nowrap', width)}>
              <button className="flex-1 text-center leading-4">{label}</button>
              <div className="mt-0.5 h-[14px] w-px bg-[#666]" />
            </div>
          ))}
        </div>
      </div>
    </section>
  )
}

const statusCells = ['w-[106px]', 'w-[74px]', 'w-[74px]', 'w-[71px]', 'w-[72px]', 'w-[69px]']

function StatusBar() {
  return (
    <footer className="flex h-[14px] shrink-0 overflow-hidden pt-1 text-xs leading-4 whitespace-nowrap">
      <span className="flex-1 pl-0.5 text-[11px] leading-4">F1キーでヘルプが表示されます</span>
      <span className="w-[121px] border-l border-[#aaa] pl-1.5">Default</span>
      {statusCells.map((w, i) => (
        <span key={i} className={clsx('border-l border-[#aaa]', w)} />
      ))}
      <span className="flex w-[143px] gap-1 border-l border-[#aaa] pl-1.5">
        <svg width="25" height="12" className="mt-0.5">
          <path d="M1 0v12M4 0v12M7 0v12M10 0v12M13 0v12M16 0v12M19 0v12M22 0v12" stroke="#5c8a1a" strokeWidth="2" />
          <path d="M10 9v3M13 7v5M16 5v7M19 3v9M22 1v11" stroke="#1b3f78" strokeWidth="2" />
        </svg>
        435/1 kb
      </span>
    </footer>
  )
}

/* ---------- dialog and notes ---------- */

const dialogTabs = [
  ['バージョン情報', 'w-[83px]'],
  ['全般', 'w-[49px]'],
  ['パラメーターの入力', 'w-[100px]'],
  ['色の設定', 'w-[65px]'],
  ['レベル表示', 'w-[66px]'],
  ['表示選択', 'w-[60px]'],
]

const colors = [
  { name: 'Gray', swatch: 'bg-[#808080]', row: 'bg-[#ececec]', line: 'bg-black' },
  { name: '239,83,80', swatch: 'bg-[#ef5350]', row: 'bg-white', line: 'bg-black' },
  { name: '38,166,154', swatch: 'bg-[#26a69a]', row: 'bg-[#0078d7] text-white', line: 'bg-[#d5ecff]' },
]

function Dialog() {
  return (
    <div role="dialog" aria-label="Custom Indicator" className="absolute top-[335px] left-[337px] flex h-[350px] w-[731px] flex-col border border-[#707070] bg-[#f0f0f0] text-xs shadow-[0_6px_16px_rgba(0,0,0,0.5)]">
      <div className="flex h-8 shrink-0 items-center bg-white pb-0.5 pl-2">
        <h2 className="flex-1">Custom Indicator - PGSセッション</h2>
        <button aria-label="ヘルプ" className="w-[46px] text-base">?</button>
        <button aria-label="閉じる" className="flex w-[47px] justify-center">
          <svg width="12" height="12"><path d="M0.500 0.500l11 11M11.500 0.500l-11 11" stroke="#000" /></svg>
        </button>
      </div>
      <div className="mt-[7px] ml-[9px] flex h-6 items-end text-[11px]">
        {dialogTabs.map(([label, width]) => {
          const active = label === '色の設定'
          return (
            <button
              key={label}
              className={clsx(
                'overflow-hidden border-t border-r border-[#d9d9d9] text-center whitespace-nowrap',
                width,
                active ? 'z-10 -mb-px h-[25px] bg-white pb-1 text-xs' : 'h-[22px] first:border-l',
                label === '全般' && 'pl-[7px] text-left',
                label === 'パラメーターの入力' && 'pl-[7px] text-left'
              )}
            >
              {label}
            </button>
          )
        })}
      </div>
      <div className="mr-[5px] ml-[7px] h-[250px] border border-[#dcdcdc] bg-white pt-[9px] pr-2.5 pl-[11px]">
        <div className="h-[229px] border border-[#828790]">
          <table className="w-full table-fixed">
            <thead>
              <tr className="h-[25px] border-b border-[#d5d5d5] text-left">
                <th className="w-[31px] border-r border-[#e0e0e0] pl-1.5 font-normal">#</th>
                <th className="w-[242px] border-r border-[#e0e0e0] pl-2 font-normal">色の設定</th>
                <th className="w-[172px] border-r border-[#e0e0e0] pl-2 font-normal">幅</th>
                <th className="pl-2 font-normal">スタイル</th>
              </tr>
            </thead>
            <tbody>
              {colors.map((c, i) => (
                <tr key={c.name} className={clsx('h-[21px] border-b border-[#d5d5d5] leading-4', c.row)}>
                  <td className="border-r border-[#d5d5d5] pl-[5px]">{i}</td>
                  <td className="border-r border-[#d5d5d5] pl-1">
                    <div className="flex items-center gap-1">
                      <i className={clsx('h-[14px] w-[13px] border border-[#999]', c.swatch)} />
                      {c.name}
                    </div>
                  </td>
                  <td className="border-r border-[#d5d5d5] pr-[9px] pl-[5px]">
                    <div className="flex items-center gap-1">
                      2.
                      <i className={clsx('h-0.5 flex-1', c.line)} />
                    </div>
                  </td>
                  <td className="pr-2 pl-[5px]">
                    <div className="flex items-center gap-1">
                      0.
                      <i className="h-px flex-1 bg-[#a0a0a0]" />
                    </div>
                  </td>
                </tr>
              ))}
            </tbody>
          </table>
        </div>
      </div>
      <div className="mt-px mr-2 flex justify-end gap-2">
        <button className="h-[25px] w-[90px] border-2 border-[#0078d7] bg-[#e1e1e1] leading-4">OK</button>
        <button className="h-[25px] w-[90px] border border-[#adadad] bg-[#e1e1e1] leading-4">キャンセル</button>
        <button className="h-[25px] w-[90px] border border-[#adadad] bg-[#e1e1e1] leading-4">リセット</button>
      </div>
      <svg width="9" height="9" className="absolute right-0.5 bottom-0.5" fill="#b8b8b8">
        <path d="M6 0h2v2H6zM3 3h2v2H3zM6 3h2v2H6zM0 6h2v2H0zM3 6h2v2H3zM6 6h2v2H6z" />
      </svg>
    </div>
  )
}

function Notes() {
  return (
    <>
      <div className="absolute top-[367px] left-[572px] z-20 h-10 w-[75px] border-3 border-[#6a9bfb]" />
      <div className="absolute top-[642px] left-[761px] z-20 h-[39px] w-[110px] border-3 border-[#6a9bfb]" />
      <div className="absolute top-[545px] left-[82px] h-8 w-[98px] border-3 border-[#6a9bfb]" />
      <svg width="150" height="40" className="absolute top-[540px] left-[174px]">
        <circle cx="10" cy="20" r="7" fill="#6a9bfb" />
        <path d="M10 20C50 14 96 4 121 17l14 8" fill="none" stroke="#6a9bfb" strokeWidth="4" />
        <path d="M146 32l-16-1 9-12z" fill="#6a9bfb" />
      </svg>
      <div className="absolute top-[717px] left-[317px] h-[220px] w-[830px] border-6 border-[#bfbfbf] bg-[#595959] px-[6px] pt-1 text-[26px] leading-10 font-bold whitespace-pre-line text-white font-['Noto_Sans_CJK_JP',sans-serif] [font-feature-settings:normal]">
        {'「色の設定」タブで、色の設定を適宜変更して「OK」をクリック\n\n#0・・・日本時間\n#1・・・欧州時間\n#2・・・アメリカ時間'}
      </div>
    </>
  )
}

/* ---------- taskbar ---------- */

function TaskButton({ label, width, running, active, children }: { label: string; width: string; running?: boolean; active?: boolean; children: ReactNode }) {
  return (
    <button
      aria-label={label}
      className={clsx(
        'flex h-full items-center justify-center border-b-2',
        width,
        running ? 'border-[#76b9ed]' : 'border-transparent',
        active && 'bg-[#5f5d58]'
      )}
    >
      {children}
    </button>
  )
}

function Taskbar() {
  return (
    <div className="flex h-[42px] shrink-0 items-center bg-[#35322d] text-white">
      <TaskButton label="スタート" width="w-[50px]">
        <svg width="17" height="17" fill="#fff"><path d="M0 2.500l7-1V8H0zM8 1.400L17 0v8H8zM0 9h7v6.500l-7-1zM8 9h9v8l-9-1.400z" /></svg>
      </TaskButton>
      <TaskButton label="Cortana" width="w-[50px]">
        <svg width="16" height="16"><circle cx="8" cy="8" r="6.800" fill="none" stroke="#fff" strokeWidth="2" /></svg>
      </TaskButton>
      <TaskButton label="タスク ビュー" width="w-[50px]">
        <svg width="18" height="17" fill="none" stroke="#fff" strokeWidth="1.300">
          <path d="M1 0v3h11V0M1 17v-3h11v3M1 5.500h11v6H1zM16 0v17" />
          <rect x="15" y="5" width="2" height="4" fill="#fff" />
        </svg>
      </TaskButton>
      <TaskButton label="Chrome" width="w-[54px]">
        <svg width="24" height="24" viewBox="0 0 24 24">
          <circle cx="12" cy="12" r="11.500" fill="#fbc116" />
          <path d="M2 6.300A11.500 11.500 0 0 0 11.500 23.500L17 15l-5-3z" fill="#34a853" />
          <path d="M22 6.300H12l5 8.700-5.500 8.500A11.500 11.500 0 0 0 22 6.300z" fill="#fbc116" />
          <path d="M2 6.300A11.500 11.500 0 0 1 22 6.300H12l-5 7z" fill="#ea4335" />
          <circle cx="12" cy="12" r="5.400" fill="#fff" />
          <circle cx="12" cy="12" r="4.300" fill="#4285f4" />
        </svg>
      </TaskButton>
      <TaskButton label="MetaTrader 4" width="w-[50px]" running active>
        <LogoIcon size={25} light />
      </TaskButton>
      <div className="w-[5px]" />
      <TaskButton label="エクスプローラー" width="w-[42px]" running>
        <svg width="24" height="20" viewBox="0 0 24 20">
          <path d="M1 1h9l2 3h11v15H1z" fill="#e9a820" />
          <path d="M1 5h22v14H1z" fill="#ffd75e" />
          <path d="M4 19v-8h16v8h-4v-3H8v3z" fill="#3a8fd6" />
        </svg>
      </TaskButton>
      <div className="w-[10px]" />
      <TaskButton label="ペイント" width="w-[41px]" running>
        <svg width="25" height="25" viewBox="0 0 25 25">
          <path d="M2 14C2 7 8 3 14 4c6 1 8 6 6 9-1 2-4 1-4 4 0 4-2 6-6 6S2 19 2 14z" fill="#c9dfee" stroke="#7aa5c2" />
          <circle cx="7" cy="10" r="2" fill="#e3452f" />
          <circle cx="12.500" cy="7.500" r="2" fill="#3fae49" />
          <circle cx="6" cy="15.500" r="2" fill="#f5c12e" />
          <circle cx="10.500" cy="19" r="2" fill="#2f7fd6" />
          <path d="M14 21L20 5" stroke="#d9822b" strokeWidth="2" />
          <path d="M19 6c0-3 2-4 4-6 0 4 0 6-2 7z" fill="#e8b878" />
        </svg>
      </TaskButton>

      <div className="flex-1" />

      <svg width="26" height="24" viewBox="0 0 26 24" className="mr-2">
        <path d="M10 1C9 7 5 10 1 10c2 6 10 7 13 1 1-4-1-8-4-10z" fill="#f5c63c" />
        <path d="M8 22a5 5 0 0 1 0-10 6 6 0 0 1 11 0 5 5 0 0 1 1 10z" fill="#d3e8f8" />
      </svg>
      <span className="w-[139px] text-sm whitespace-nowrap">22℃ くもり時々晴れ</span>
      <ChevronUp size={18} strokeWidth={1.5} className="mx-[3px]" />
      <svg width="18" height="14" viewBox="0 0 18 14" fill="none" stroke="#fff" className="mx-1">
        <rect x="5" y="3.500" width="11" height="8" />
        <rect x="7" y="5.500" width="7" height="4" fill="#fff" />
        <path d="M17 6v3M1 2h5v3q-2.500 3-5 0zM3.500 6v6M2 0v2M5 0v2" />
      </svg>
      <Wifi size={17} strokeWidth={1.5} className="mx-1 -rotate-45" />
      <Volume2 size={17} strokeWidth={1.5} className="mr-[6px]" />
      <span className="w-6 text-center text-xl">A</span>
      <time className="w-[72px] text-center text-xs leading-[18px]">
        19:57
        <br />
        2021/09/15
      </time>
      <button aria-label="通知" className="ml-2.5 flex">
        <svg width="28" height="28" viewBox="0 0 28 28">
          <path d="M1 2h16v13H9l-4 4v-4H1z" fill="#fff" />
          <path d="M4 5.500h10M4 8.500h10M4 11.500h6" stroke="#35322d" />
          <circle cx="17.500" cy="19" r="7.500" fill="#35322d" stroke="#999" />
          <text x="14.500" y="23" fontSize="11" fill="#fff">1</text>
        </svg>
      </button>
      <div className="ml-3 h-full w-[5px] border-l border-[#77756f]" />
    </div>
  )
}

export default function App() {
  return (
    <div className="relative flex h-screen flex-col overflow-hidden bg-[#75695a] text-black font-['Open_Sans','Noto_Sans_CJK_JP',sans-serif] [font-feature-settings:'palt']">
      <div className="mt-px ml-[11px] flex min-h-0 flex-1 flex-col bg-[#f0f0f0]">
        <TitleBar />
        <MenuBar />
        <Toolbar />
        <div className="flex min-h-0 flex-1">
          <aside className="flex w-[248px] shrink-0 flex-col border-r border-[#999]">
            <MarketWatch />
            <Navigator />
          </aside>
          <Chart />
        </div>
        <Terminal />
        <StatusBar />
      </div>
      <Taskbar />
      <Dialog />
      <Notes />
    </div>
  )
}
